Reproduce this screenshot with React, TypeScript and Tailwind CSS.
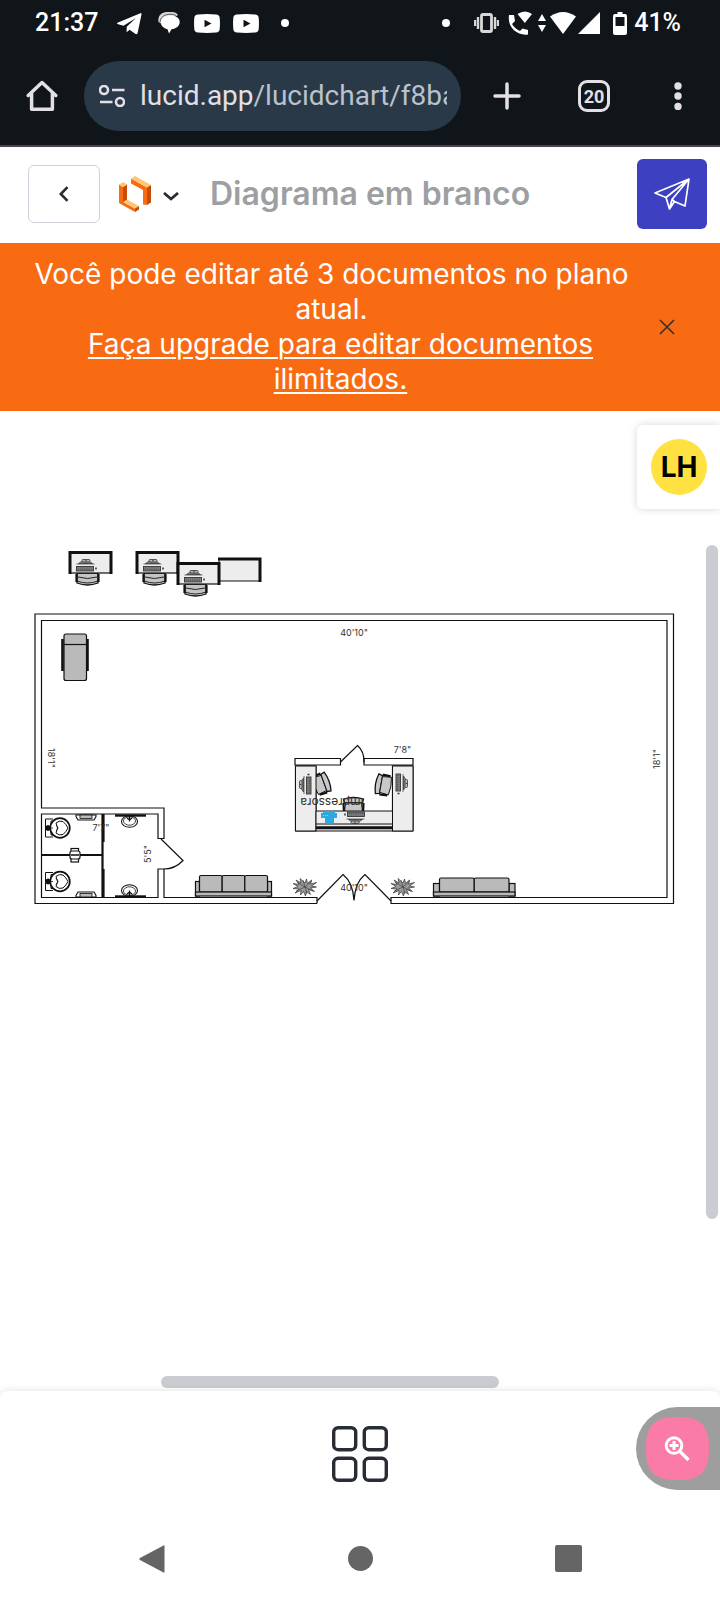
import type { ReactNode } from 'react';

const INK = '#111111';
const SOFT_INK = '#333333';

function StatusBar() {
  return (
    <div className="flex h-[46px] items-center justify-between pr-[39px] pl-[35px] text-[25px] font-medium text-white">
      <div className="flex items-center">
        <span>21:37</span>
        <svg className="ml-[19px] h-6 w-[25px]" viewBox="0 0 25 24" fill="#fff">
          <path d="M24 2 1 11.5q-2 1 .2 1.7l5.3 1.6L19 7 9.7 15.8l-.1 5.5 3-2.6 5.6 4c1.3.9 2.2.4 2.5-1.1L24.6 3z" />
        </svg>
        <svg className="ml-4 h-6 w-[22px]" viewBox="0 0 22 24">
          <path d="M.5 11C-.5 4 4 1 10 1h4q4 0 6 3L4 13z" fill="#d8d8d8" />
          <path d="M12 4.500c6 0 9.700 2.500 9.700 6.500 0 4-3.700 6.800-8.200 7.200L11 22.500l-1.500-4.300C5 17 2.800 14.500 2.800 11 2.800 6.800 7 4.500 12 4.500z" fill="#fff" />
          <path d="M2 11C2.500 6 7 3.200 12 3.200q4 0 6 1.300" stroke="#555" fill="none" />
        </svg>
        {[0, 1].map((n) => (
          <svg key={n} className={n ? 'ml-[13px] h-[19px] w-[26px]' : 'ml-[14px] h-[19px] w-[26px]'} viewBox="0 0 26 19">
            <path d="M4 .5q9-.8 18 0 3.500.2 3.700 3.500.5 5.500 0 11-.2 3.300-3.700 3.500-9 .8-18 0-3.500-.2-3.700-3.500-.5-5.500 0-11Q.5.700 4 .500z" fill="#fff" />
            <path d="m10.500 5.700 7 3.800-7 3.800z" fill="#101519" />
          </svg>
        ))}
        <span className="ml-[22px] size-2 rounded-full bg-white" />
      </div>
      <div className="flex items-center">
        <span className="mr-6 size-2 rounded-full bg-white" />
        <svg className="h-5 w-[25px]" viewBox="0 0 25 20" fill="none" stroke="#d8d8d8" strokeWidth="2">
          <rect x="7.500" y="1.500" width="10" height="17" rx="1.500" strokeWidth="2.800" />
          <path d="M1 7v6M4 4v12M24 7v6M21 4v12" strokeWidth="2.400" />
        </svg>
        <svg className="ml-[9px] h-6 w-6" viewBox="0 0 24 24" fill="#fff">
          <path d="M9.500 3q7.500-5 14.500 0l-7.200 9z" />
          <path d="M1 4h5l1 6-3 3q3 5 8 7l2.500-2.500L20 19v4.500C10 25-1 17 1 4z" />
        </svg>
        <svg className="ml-[6px] h-5 w-2" viewBox="0 0 8 20" fill="#fff">
          <path d="m4 1 4 7H0zM0 12h8l-4 7z" />
        </svg>
        <svg className="ml-1 h-[22px] w-[26px]" viewBox="0 0 26 22" fill="#fff">
          <path d="M0 4.500q13-9 26 0L13 22z" />
        </svg>
        <svg className="ml-[2px] size-[22px]" viewBox="0 0 22 22" fill="#fff">
          <path d="M22 0v22H0z" />
        </svg>
        <svg className="ml-[13px] h-[23px] w-[14px]" viewBox="0 0 14 23" fill="#fff">
          <path fillRule="evenodd" d="M4.500 0h5v2H12q2 0 2 2v17q0 2-2 2H2q-2 0-2-2V4q0-2 2-2h2.500zM2.500 5v9h9V5z" />
        </svg>
        <span className="ml-[7px]">41%</span>
      </div>
    </div>
  );
}

function BrowserBar() {
  return (
    <div className="flex items-center pt-[15px] pr-[38px] pb-[14px] pl-[26px] text-[#e2e0e6]">
      <button type="button" aria-label="Home" className="shrink-0">
        <svg className="size-8" viewBox="0 0 32 32" fill="none" stroke="currentColor" strokeWidth="3.500" strokeLinejoin="round" strokeLinecap="round">
          <path d="M2.200 15.500 16 2.500l13.800 13M5.600 13v16.300h20.800V13" />
        </svg>
      </button>
      <div className="ml-[26px] flex h-[70px] min-w-0 flex-1 items-center rounded-full bg-[#2a3948] pr-[14px] pl-[15px]">
        <svg className="h-[22px] w-[26px] shrink-0" viewBox="0 0 26 22" fill="none" stroke="currentColor" strokeWidth="2.600">
          <circle cx="5" cy="5" r="4" />
          <circle cx="21" cy="17" r="4" />
          <path d="M13 5h12.500M1 17h12.500" />
        </svg>
        <input
          aria-label="Address"
          readOnly
          value="lucid.app/lucidchart/f8ba"
          className="sr-only"
        />
        <div aria-hidden="true" className="ml-[15px] min-w-0 flex-1 overflow-hidden text-[28px] leading-9 whitespace-nowrap">
          lucid.app<span className="text-[#b9c2cd]">/lucidchart/f8ba</span>
        </div>
      </div>
      <button type="button" aria-label="New tab" className="ml-8 shrink-0">
        <svg className="size-7" viewBox="0 0 28 28" stroke="currentColor" strokeWidth="3.500" strokeLinecap="round">
          <path d="M14 2v24M2 14h24" />
        </svg>
      </button>
      <button type="button" aria-label="Tabs" className="ml-[57px] flex size-8 shrink-0 items-center justify-center rounded-[9px] border-[3px] border-[#e2e0e6] text-[18px] font-bold">
        20
      </button>
      <button type="button" aria-label="Menu" className="ml-16 shrink-0">
        <svg className="h-7 w-2" viewBox="0 0 8 28" fill="currentColor">
          <circle cx="4" cy="4" r="3.700" />
          <circle cx="4" cy="14" r="3.700" />
          <circle cx="4" cy="24.500" r="3.700" />
        </svg>
      </button>
    </div>
  );
}

function DocumentHeader() {
  return (
    <header className="flex h-24 items-center pr-[13px] pb-[2px] pl-7">
      <button type="button" aria-label="Back" className="flex h-[58px] w-[72px] shrink-0 items-center justify-center rounded-md border border-[#cdd1da]">
        <svg className="h-4 w-[10px]" viewBox="0 0 10 16" fill="none" stroke="#282c33" strokeWidth="2.600">
          <path d="M8.500 1.200 1.800 8l6.700 6.800" />
        </svg>
      </button>
      <button type="button" aria-label="Lucid menu" className="ml-[19px] flex shrink-0 items-center gap-3">
        <svg className="h-9 w-8" viewBox="0 0 32 36">
          <path d="M0 8.500 4 11v15l12 6.500V36L0 27z" fill="#f96b13" />
          <path d="M4 11l4-2.500V24l-4 3z" fill="#c64c08" />
          <path d="M0 8.500 4.500 6 8 8.500 4 11z" fill="#ffc675" />
          <path d="m4 26 4-2.500 12 6.500-4 2.500z" fill="#ffc675" />
          <path d="m16 32.500 4-2.500v3.500L16 36z" fill="#c64c08" />
          <path d="M12 2.500 28 11.500V29l-4-.5V14l-12-6.500z" fill="#f96b13" />
          <path d="m12 2.500 4-2.500 16 9-4 2.500z" fill="#ffc675" />
          <path d="m28 11.500 4-2.500v17.500L28 29z" fill="#c64c08" />
        </svg>
        <svg className="mt-1 h-[9px] w-4" viewBox="0 0 16 9" fill="none" stroke="#282c33" strokeWidth="2.800">
          <path d="m1 1 7 6 7-6" />
        </svg>
      </button>
      <h1 className="ml-[31px] min-w-0 flex-1 truncate text-[32px] leading-10 font-semibold text-[#9d9fa3]">Diagrama em branco</h1>
      <button type="button" aria-label="Share" className="flex size-[70px] shrink-0 items-center justify-center rounded-md bg-[#3d40c0]">
        <svg className="h-8 w-9" viewBox="0 0 36 32" fill="none" stroke="#fff" strokeWidth="1.700" strokeLinejoin="round">
          <path d="M35 1 1 15l11 4.500L15.500 31l5-7.500L31 28zM35 1 12 19.500M35 1 18 21.500 15.500 31M18 21.500l2.500 2" />
        </svg>
      </button>
    </header>
  );
}

function UpgradeBanner() {
  return (
    <section className="flex items-center bg-[#f96b13] py-[14px] pr-[45px] pl-7 text-white">
      <div className="min-w-0 flex-1 text-center text-[28px] leading-[35px]">
        <p>Você pode editar até 3 documentos no plano atual.</p>
        <p className="pl-[18px]">
          <a href="#upgrade" className="underline decoration-2 underline-offset-[3px]">Faça upgrade para editar documentos ilimitados.</a>
        </p>
      </div>
      <button type="button" aria-label="Close" className="ml-6 shrink-0">
        <svg className="size-4" viewBox="0 0 16 16" stroke="#3b3232" strokeWidth="1.700">
          <path d="m1 1 14 14M15 1 1 15" />
        </svg>
      </button>
    </section>
  );
}

function Computer() {
  return (
    <g stroke={SOFT_INK}>
      <rect x="-9" y="1.500" width="17" height="4.500" fill="#888" strokeWidth=".9" />
      <path d="M-8 3H7M-8 4.600H7" strokeWidth=".6" strokeDasharray="1.500 .7" />
      <path d="M-7-1.500-4-3.500H4l3 2z" fill="#888" strokeWidth=".7" />
      <rect x="-3.500" y="-5.500" width="8" height="2.500" rx="1" fill="#bbb" strokeWidth=".8" />
      <circle cx=".5" cy="-4.300" r=".6" fill={INK} stroke="none" />
      <path d="M-9-1H9" strokeWidth=".7" />
      <path d="M10.500 2.500v2" strokeWidth="1.500" />
    </g>
  );
}

function Workstation({ x, y }: { x: number; y: number }) {
  return (
    <g transform={`translate(${x} ${y})`} stroke={INK}>
      <path d="M8 22h21v10q-10.500 4-21 0z" fill="#c4c4c4" strokeWidth="1.300" />
      <path d="M7.500 23v8M29.500 23v8" strokeWidth="2.200" />
      <path d="M9 26q9.500 3 19 0M8 30q10.500 4 21 0" fill="none" strokeWidth=".9" />
      <rect x="1" y="1" width="41" height="21" fill="#ededed" strokeWidth="1.200" />
      <path d="M1 23V1.500h41V23" fill="none" strokeWidth="3" />
      <g transform="translate(16.500 14)"><Computer /></g>
    </g>
  );
}

function Chair({ transform }: { transform: string }) {
  return (
    <g transform={transform} stroke={INK} fill="#c8c8c8">
      <path d="M-9-3-10-7q10-3 20 0L9-3z" strokeWidth="1.300" />
      <path d="M-8-3H8l1 9q-9 2-18 0z" strokeWidth=".9" />
      <path d="m-10-3 .4 8M10-3l-.4 8" strokeWidth="2.200" />
    </g>
  );
}

function Toilet({ y }: { y: number }) {
  return (
    <g transform={`translate(0 ${y})`} stroke={INK} fill="#fff">
      <path d="M53-9h-7.500V9H53" strokeWidth="1" />
      <path d="M51-7v14h3V-7z" strokeWidth="1" />
      <circle cx="60" cy="0" r="9.800" strokeWidth="1.700" />
      <path d="M56-5q3-3 7-1.500 3 2.500 5 6.500-2 4-5 6.500-4 1.500-7-1.500 3-5 0-10z" strokeWidth="1" />
      <path d="M56-3q4 3 0 6" fill="none" strokeWidth=".8" />
      <circle cx="48" cy="0" r="2.800" fill={INK} stroke="none" />
      <path d="M48-3v6M45 0h8" strokeWidth=".8" />
    </g>
  );
}

function Sink({ transform }: { transform: string }) {
  return (
    <g transform={transform} stroke={INK} fill="#fff">
      <ellipse cx="0" cy="6" rx="8" ry="5.800" strokeWidth="1.100" />
      <ellipse cx="0" cy="5.500" rx="6" ry="4.200" strokeWidth=".8" />
      <path d="M-14.500 0h31" strokeWidth="2.400" />
      <path d="M0 0v6M-2.500 2.500 0 4.500l2.500-2" fill="none" strokeWidth="1.200" />
    </g>
  );
}

function Rail({ transform }: { transform: string }) {
  return (
    <g transform={transform} stroke={INK} fill="#fff">
      <path d="M-10 0h20v1.500L8 5H-8l-2-3.500z" strokeWidth="1.100" />
      <rect x="-6" y="0" width="12" height="3.500" fill="#bbb" strokeWidth=".8" />
    </g>
  );
}

function Plant({ x, y }: { x: number; y: number }) {
  return (
    <g transform={`translate(${x} ${y})`} stroke="#333" fill="#999" strokeWidth=".7" strokeLinejoin="round">
      <path d="m0-4 1.500-4 1 4.500 4-3.500-1 4 6-1.500-5 3.500 5 1-6 1 4 3.500-6-2 2 5-4-3-1 4.500-2-4.500-3 3.500.500-4.500-6 2.500 4-4-6-.5 5-2-5-3 6 1-3-4.500 5 3-1-4.500z" />
      <path d="m-8-5 8 5 7-6M-9 4l9-4 8 4M-2-7 0 0l2 7" fill="none" strokeWidth=".6" />
    </g>
  );
}

function Sofa({ x, y, width, height, seats, arm }: { x: number; y: number; width: number; height: number; seats: number; arm: number }) {
  const inset = seats === 3 ? 4 : 6;
  const seat = (width - inset * 2) / seats;
  return (
    <g transform={`translate(${x} ${y})`} stroke={INK} fill="#bababa" strokeWidth="1.200">
      <rect x="0" y={arm} width={inset} height={height - arm} />
      <rect x={width - inset} y={arm} width={inset} height={height - arm} />
      {Array.from({ length: seats }, (_, n) => (
        <rect key={n} x={inset + n * seat} y="0" width={seat} height={height - 4} rx="1.500" />
      ))}
      <rect x="0" y={height - 4} width={width} height="4" />
    </g>
  );
}

function Label({ x, y, turn = 0, size = 9, children }: { x: number; y: number; turn?: number; size?: number; children: ReactNode }) {
  return (
    <text transform={`translate(${x} ${y}) rotate(${turn})`} fontSize={size} textAnchor="middle" dominantBaseline="central" fill="#333">
      {children}
    </text>
  );
}

function FloorPlan() {
  return (
    <svg className="block w-full" viewBox="0 411 720 520" role="img" aria-label="Diagrama" fontFamily="Inter, sans-serif">
      <Workstation x={69} y={551} />
      <Workstation x={136} y={551} />
      <rect x="219" y="559" width="41" height="22" fill="#ededed" stroke={INK} strokeWidth="1" />
      <path d="M218 559h42v23" fill="none" stroke={INK} strokeWidth="3" />
      <Workstation x={177} y={562} />

      <g fill="none" stroke={INK} strokeWidth="1.200">
        <path d="M317 903.500H35V614h638.500v289.500H391V897.500h276V620.500H41.500V808H164v30.500h-6V814H41.500v83.500H158V869h6v28.500h153v6" />
        <path d="m161 839 22 21.500q-8 8.500-19 8.500" />
        <path d="m317 901 26-26.500q10 8 11 26 1-18 11-26l26 26.500" />
      </g>

      <g stroke={INK} fill="#bababa">
        <path d="M62.500 639v32M87.500 639v32" strokeWidth="2.600" />
        <rect x="64" y="634" width="22.500" height="46.500" rx="2" strokeWidth="1.200" />
        <path d="M64 644.500h22.500" strokeWidth="1.200" />
      </g>

      <path d="M102.500 814v83M41.500 855h61" stroke={INK} strokeWidth="2.200" />
      <path d="M103.500 814v28M103.500 869v28" stroke={INK} strokeWidth="2.200" />
      <Toilet y={828} />
      <Toilet y={881.5} />
      <Rail transform="translate(86 815)" />
      <Rail transform="translate(86 897) scale(1 -1)" />
      <g stroke={INK} fill="#fff">
        <rect x="71" y="848.500" width="7.500" height="13.500" strokeWidth="1.200" />
        <rect x="70" y="851" width="10" height="8" rx="2" strokeWidth="1.200" />
        <path d="M71 855h8" strokeWidth="1.500" />
      </g>
      <Sink transform="translate(129.500 815.500)" />
      <Sink transform="translate(129.500 896.500) scale(1 -1)" />

      <g stroke={INK} strokeWidth="1.200">
        <path d="M295 758.500h45.500v6.500H295zM364 758.500h49v6.500h-49z" fill="#fff" />
        <path d="m340.500 762 17-16.500q7 6 6.500 17" fill="none" />
        <path d="M295.500 766H316v65h-20.500zM392.500 766H413v65h-20.500z" fill="#ededed" />
      </g>
      <Chair transform="translate(321 784) rotate(70)" />
      <Chair transform="translate(384 785) rotate(-80)" />
      <Chair transform="translate(353.500 806)" />
      <path d="M295.500 766H316v65h-20.500zM392.500 766H413v65h-20.500z" fill="#ededed" stroke={INK} />
      <path d="M316 811h76.500v20H316z" fill="#ededed" stroke={INK} />
      <path d="M316 824h76.500" stroke={INK} />
      <path d="M316 827.800h76.500" stroke={INK} strokeWidth="3" />
      <g transform="translate(305 785) rotate(-90)"><Computer /></g>
      <g transform="translate(402 783) rotate(90)"><Computer /></g>
      <g transform="translate(355.500 818) rotate(180)"><Computer /></g>
      <path d="M323 811h12v2h2v5h-3v5.500h-9V818h-4v-5h2z" fill="#29abe2" />
      <path d="M323 815.500h6" stroke="#8fd6f3" strokeDasharray="1 1" />

      <Sofa x={195.500} y={875.500} width={76} height={20.500} seats={3} arm={6} />
      <Sofa x={433.500} y={878} width={81.500} height={18} seats={2} arm={5.500} />
      <Plant x={305} y={887} />
      <Plant x={403} y={887} />

      <Label x={354} y={632.500}>40'10"</Label>
      <Label x={402.500} y={749}>7'8"</Label>
      <Label x={51} y={758} turn={90}>18'1"</Label>
      <Label x={656.500} y={759} turn={-90}>18'1"</Label>
      <Label x={101} y={827}>7'7"</Label>
      <Label x={147.500} y={854} turn={-90}>5'5"</Label>
      <Label x={354} y={887}>40'10"</Label>
      <Label x={332} y={802} turn={180} size={12}>Impressora</Label>
    </svg>
  );
}

function BottomBar() {
  return (
    <footer className="relative rounded-t-lg bg-white shadow-[0_0_8px_rgba(0,0,0,0.12)]">
      <div className="flex h-[126px] items-center justify-center">
        <button type="button" aria-label="Shapes">
          <svg className="size-14" viewBox="0 0 56 56" fill="none" stroke="#282c33" strokeWidth="3.400">
            <rect x="1.700" y="1.700" width="22" height="22" rx="4.500" />
            <rect x="32.300" y="1.700" width="22" height="22" rx="4.500" />
            <rect x="1.700" y="32.300" width="22" height="22" rx="4.500" />
            <rect x="32.300" y="32.300" width="22" height="22" rx="4.500" />
          </svg>
        </button>
      </div>
      <nav className="grid h-[83px] grid-cols-3 place-items-center px-12">
        <button type="button" aria-label="Back">
          <svg className="h-7 w-[26px]" viewBox="0 0 26 28" fill="#656565"><path d="M24.500.5q1-.5 1 .8v25.400q0 1.300-1 .8L1 15q-1.500-1 0-2z" /></svg>
        </button>
        <button type="button" aria-label="Home" className="size-[25px] rounded-full bg-[#656565]" />
        <button type="button" aria-label="Recent apps" className="size-[27px] rounded-xs bg-[#656565]" />
      </nav>
      <button type="button" aria-label="Zoom in" className="absolute top-4 right-0 flex h-[83px] w-[84px] items-center rounded-l-full bg-[#9e9e9e] pl-[10px]">
        <svg className="size-[63px]" viewBox="0 0 63 63">
          <path d="M31.500 0C54 0 63 7 63 31.500S54 63 31.500 63 0 56 0 31.500 9 0 31.500 0z" fill="#fa7aa8" />
          <g fill="none" stroke="#fff" strokeWidth="3">
            <circle cx="28" cy="28.500" r="7.800" />
            <path d="m33.500 34 9 9" strokeWidth="3.400" />
            <path d="M28 24v9M23.500 28.500h9" />
          </g>
        </svg>
      </button>
    </footer>
  );
}

export default function App() {
  return (
    <div className="flex min-h-screen flex-col bg-white font-['Inter',sans-serif]">
      <div className="border-b-2 border-[#46474e] bg-[#101519] font-['Roboto',sans-serif]">
        <StatusBar />
        <BrowserBar />
      </div>
      <DocumentHeader />
      <UpgradeBanner />
      <main className="relative flex-1 overflow-hidden">
        <FloorPlan />
        <div className="absolute top-[14px] right-0 flex h-[84px] w-[83px] items-center rounded-l-md bg-white pl-[14px] shadow-[0_0_8px_rgba(0,0,0,0.16)]">
          <span className="flex size-14 items-center justify-center rounded-full bg-[#ffe241] text-[28px] font-bold text-black">LH</span>
        </div>
        <div className="absolute top-[134px] right-[2px] h-[674px] w-3 rounded-full bg-[#c9cdd2]" />
        <div className="absolute bottom-[3px] left-[161px] h-3 w-[338px] rounded-full bg-[#c9cdd2]" />
      </main>
      <BottomBar />
    </div>
  );
}
